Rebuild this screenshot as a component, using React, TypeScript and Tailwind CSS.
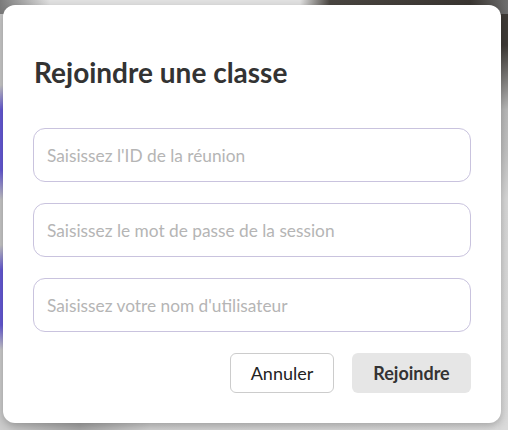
import React from "react";

const inputCls =
  "h-[54px] w-full rounded-[12px] border border-[#c9c3de] bg-white px-[13px] text-[17.3px] text-[#333] outline-none placeholder:text-[#b5b5b5]";

export default function App() {
  return (
    <div
      className="flex w-[508px] h-[430px] flex-col overflow-hidden pl-[3px] pt-[5px] [background:linear-gradient(to_right,#7a7a7a,#e2e2e2_50px,#e2e2e2_300px,#4a4641_330px,#3a3632_470px,#6e6e6e)_top/100%_14px_no-repeat,linear-gradient(to_bottom,#3e3a36,#3e3a36_45px,#b8b8b8_110px,#c0c0c0_150px,#d6d6d6_200px,#dadada)_right/10px_100%_no-repeat,linear-gradient(to_bottom,#c8c8c8_85px,#6559d6_110px,#6559d6_170px,#c6c6c6_200px,#c6c6c6_245px,#6559d6_270px,#6559d6_325px,#cccccc_350px)_left/6px_100%_no-repeat,linear-gradient(to_right,#cfcfcf,#a9a9a9_80px,#d2d2d2_150px,#dcdcdc)_bottom/100%_14px_no-repeat,#d8d8d8]"
      style={{ fontFamily: "Lato, 'Noto Sans', sans-serif" }}
    >
      <div className="w-[498px] rounded-[12px] bg-white px-[30px] pt-[50px] pb-[30px] shadow-[0_3px_8px_rgba(0,0,0,0.25)]">
        <h2 className="pl-[1px] text-[28px] leading-[34px] font-bold text-[#333333]">Rejoindre une classe</h2>
        <div className="mt-[39px] flex flex-col gap-[21px]">
          <input className={inputCls} placeholder="Saisissez l'ID de la réunion" />
          <input className={inputCls} placeholder="Saisissez le mot de passe de la session" />
          <input className={inputCls} placeholder="Saisissez votre nom d'utilisateur" />
        </div>
        <div className="mt-[21px] flex justify-end gap-[18px]">
          <button className="h-[40px] w-[104px] rounded-[6px] border border-[#cccccc] bg-white text-[18px] text-[#222]">
            Annuler
          </button>
          <button className="h-[40px] w-[119px] rounded-[6px] bg-[#e6e6e6] text-[18px] font-bold text-[#333]">
            Rejoindre
          </button>
        </div>
      </div>
    </div>
  );
}
